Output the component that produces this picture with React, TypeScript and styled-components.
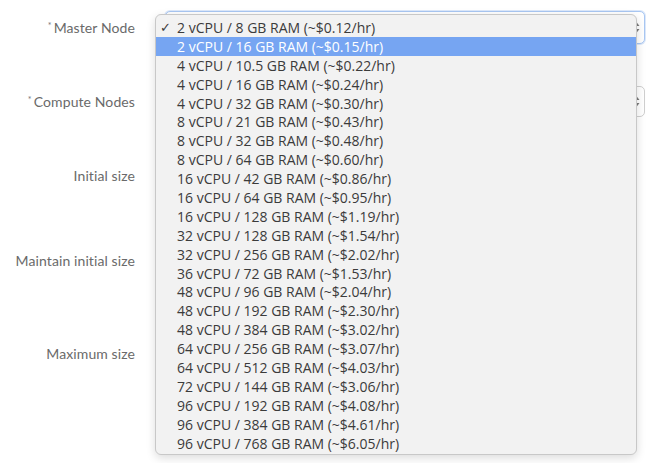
import styled, { createGlobalStyle } from 'styled-components';

const options = [
  '2 vCPU / 8 GB RAM (~$0.12/hr)',
  '2 vCPU / 16 GB RAM (~$0.15/hr)',
  '4 vCPU / 10.5 GB RAM (~$0.22/hr)',
  '4 vCPU / 16 GB RAM (~$0.24/hr)',
  '4 vCPU / 32 GB RAM (~$0.30/hr)',
  '8 vCPU / 21 GB RAM (~$0.43/hr)',
  '8 vCPU / 32 GB RAM (~$0.48/hr)',
  '8 vCPU / 64 GB RAM (~$0.60/hr)',
  '16 vCPU / 42 GB RAM (~$0.86/hr)',
  '16 vCPU / 64 GB RAM (~$0.95/hr)',
  '16 vCPU / 128 GB RAM (~$1.19/hr)',
  '32 vCPU / 128 GB RAM (~$1.54/hr)',
  '32 vCPU / 256 GB RAM (~$2.02/hr)',
  '36 vCPU / 72 GB RAM (~$1.53/hr)',
  '48 vCPU / 96 GB RAM (~$2.04/hr)',
  '48 vCPU / 192 GB RAM (~$2.30/hr)',
  '48 vCPU / 384 GB RAM (~$3.02/hr)',
  '64 vCPU / 256 GB RAM (~$3.07/hr)',
  '64 vCPU / 512 GB RAM (~$4.03/hr)',
  '72 vCPU / 144 GB RAM (~$3.06/hr)',
  '96 vCPU / 192 GB RAM (~$4.08/hr)',
  '96 vCPU / 384 GB RAM (~$4.61/hr)',
  '96 vCPU / 768 GB RAM (~$6.05/hr)',
];

const GlobalStyle = createGlobalStyle`
  html, body, #root {
    min-height: 463px;
  }
  body {
    margin: 0;
    background: #ffffff;
    font-family: Lato, "Open Sans", sans-serif;
  }
`;

interface RowProps {
  $height: number;
}

interface SelectBoxProps {
  $focused?: boolean;
}

interface OptionProps {
  $active?: boolean;
}

function Arrows() {
  return (
    <ArrowIcon width="8" height="13" viewBox="0 0 8 13">
      <path d="M4 0.5 L7.5 5 L0.5 5 Z" fill="#7a7a7a" />
      <path d="M4 12.5 L7.5 8 L0.5 8 Z" fill="#7a7a7a" />
    </ArrowIcon>
  );
}

export default function App() {
  return (
    <>
      <GlobalStyle />
      <Form>
        <Row $height={33}>
          <Label>
            <Required>*</Required>Master Node
          </Label>
          <SelectBox $focused>
            <Arrows />
            <Menu>
              {options.map((option, index) => (
                <Option key={option} $active={index === 1}>
                  <Check>{index === 0 ? '✓' : ''}</Check>
                  {option}
                </Option>
              ))}
            </Menu>
          </SelectBox>
        </Row>
        <Row $height={31}>
          <Label>
            <Required>*</Required>Compute Nodes
          </Label>
          <SelectBox>
            <Arrows />
          </SelectBox>
        </Row>
        <Row $height={33}>
          <Label>Initial size</Label>
          <div />
        </Row>
        <Row $height={52}>
          <Label>Maintain initial size</Label>
          <div />
        </Row>
        <Row $height={50}>
          <Label>Maximum size</Label>
          <div />
        </Row>
      </Form>
    </>
  );
}

const Form = styled.div`
  display: flex;
  flex-direction: column;
  gap: 42px;
  width: 650px;
  height: 463px;
  padding: 11px 5px 0 0;
  box-sizing: border-box;
`;

const Row = styled.div<RowProps>`
  display: grid;
  grid-template-columns: 135px 1fr;
  column-gap: 30px;
  align-items: center;
  flex-shrink: 0;
  height: ${({ $height }) => $height}px;
`;

const Label = styled.div`
  text-align: right;
  font-size: 14px;
  color: #6a6a6a;
  letter-spacing: 0.1px;
  white-space: nowrap;
`;

const Required = styled.span`
  display: inline-block;
  font-size: 9px;
  color: #777;
  margin-right: 2px;
  vertical-align: 4px;
`;

const SelectBox = styled.div<SelectBoxProps>`
  position: relative;
  display: flex;
  align-items: center;
  justify-content: flex-end;
  height: 100%;
  padding-right: 4px;
  box-sizing: border-box;
  background: #fff;
  border: ${({ $focused }) => ($focused ? '1.5px solid #a9c7f2' : '1px solid #cfcfcf')};
  border-radius: 5px;
  box-shadow: ${({ $focused }) => ($focused ? '0 0 0 1px #dce8fa' : 'none')};
`;

const ArrowIcon = styled.svg`
  display: block;
`;

const Menu = styled.div`
  position: absolute;
  left: -11px;
  top: 2px;
  width: 482px;
  height: 441px;
  box-sizing: border-box;
  padding-top: 3px;
  background: #f2f2f2;
  border: 1px solid #c8c8c8;
  border-radius: 6px;
  box-shadow: 0 3px 10px rgba(0, 0, 0, 0.14);
  font-family: "Open Sans", "Liberation Sans", sans-serif;
  z-index: 2;
`;

const Option = styled.div<OptionProps>`
  display: flex;
  align-items: center;
  height: 18.9px;
  font-size: 14px;
  color: ${({ $active }) => ($active ? '#ffffff' : '#3b3b3b')};
  background: ${({ $active }) => ($active ? '#76a5f2' : 'transparent')};
  white-space: nowrap;
`;

const Check = styled.span`
  display: inline-block;
  width: 21px;
  padding-left: 4px;
  box-sizing: border-box;
  font-size: 13px;
  color: #3b3b3b;
`;
